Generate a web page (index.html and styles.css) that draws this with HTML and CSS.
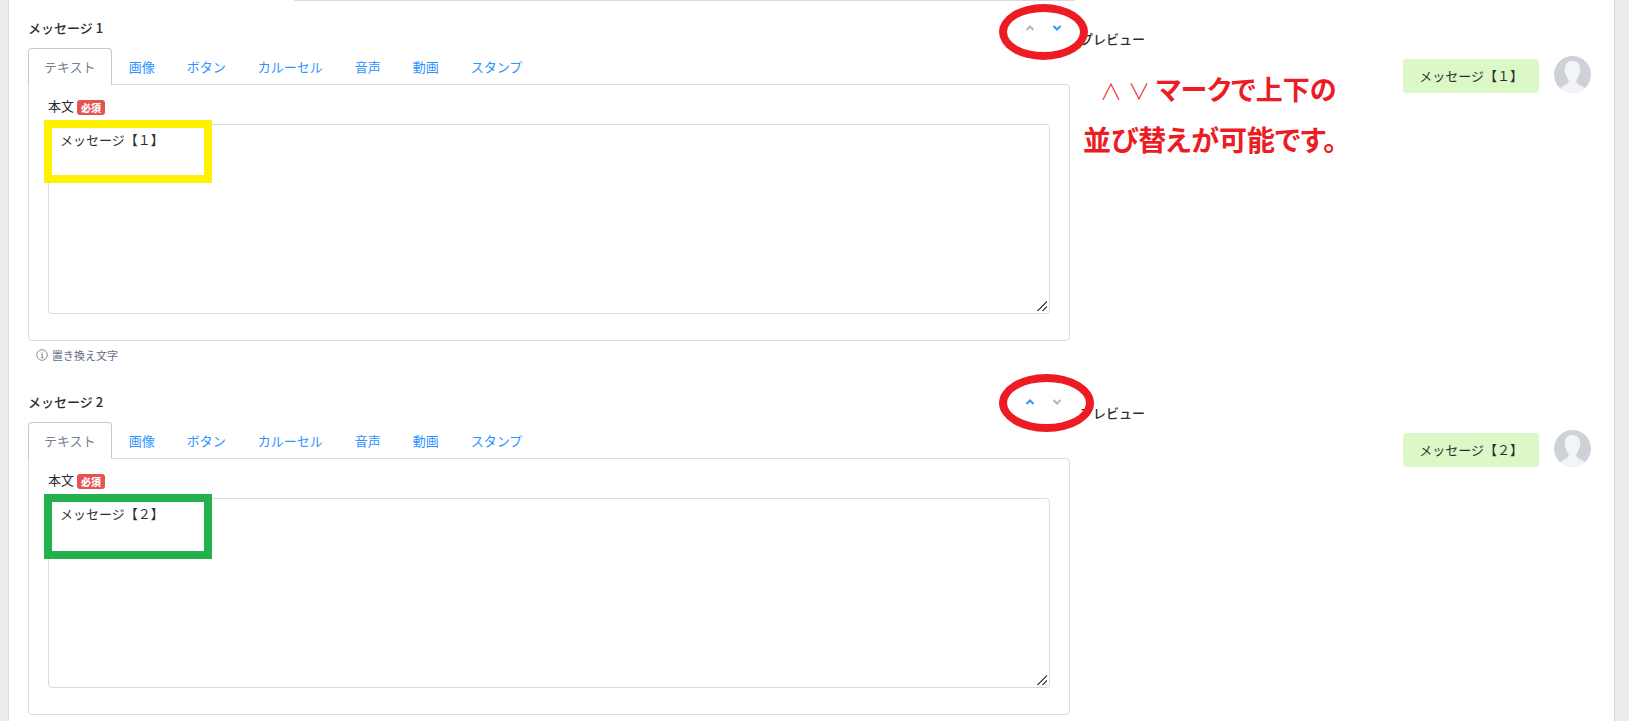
FILE: index.html
```html
<!DOCTYPE html>
<html lang="ja">
<head>
  <meta charset="UTF-8">
  <meta name="viewport" content="width=device-width, initial-scale=1.0">
  <title>メッセージ</title>
  <link rel="stylesheet" href="styles.css">
</head>
<body>
<main class="sheet">
  <div class="prev-field"></div>

  <section class="message">
    <div class="editor">
      <div class="head">
        <h2 class="title">メッセージ 1</h2>
        <div class="sort">
          <button class="sort-btn" type="button" aria-label="上へ" disabled>
            <svg width="10" height="8" viewBox="0 0 10 8"><path d="M1.500 6L5 2.500L8.500 6"/></svg>
          </button>
          <button class="sort-btn" type="button" aria-label="下へ">
            <svg width="10" height="8" viewBox="0 0 10 8"><path d="M1.500 2L5 5.500L8.500 2"/></svg>
          </button>
          <span class="ring"></span>
        </div>
      </div>
      <nav class="tabs">
        <a class="tab active" href="#text1">テキスト</a>
        <a class="tab" href="#image1">画像</a>
        <a class="tab" href="#button1">ボタン</a>
        <a class="tab" href="#carousel1">カルーセル</a>
        <a class="tab" href="#audio1">音声</a>
        <a class="tab" href="#video1">動画</a>
        <a class="tab" href="#stamp1">スタンプ</a>
      </nav>
      <div class="panel" id="text1">
        <label class="label" for="body1">本文 <span class="badge">必須</span></label>
        <div class="field">
          <textarea class="body-text" id="body1">メッセージ【１】</textarea>
          <span class="mark mark-yellow"></span>
        </div>
      </div>
      <a class="hint" href="#replace1">
        <svg width="12" height="12" viewBox="0 0 12 12"><circle cx="6" cy="6" r="5.300"/><path d="M5 5.200H6.200V8.700M4.800 8.700H7.500M5.600 3.300H6.600"/></svg>
        置き換え文字
      </a>
    </div>
    <div class="preview">
      <p class="preview-label">プレビュー</p>
      <div class="talk">
        <p class="bubble">メッセージ【１】</p>
        <svg class="avatar" viewBox="0 0 37 37">
          <circle cx="18.500" cy="18.500" r="18.500" fill="#ced2d8"/>
          <path fill="#f2f4f6" d="M18.500 5C13.500 5 11 8.500 11 12.500C11 13.500 10.500 14 10.700 15.500C11 17.500 11.700 18 12.200 19C12.700 21.500 13.700 23 14.800 24.300C15 28 11 29 6 32.200A18.500 18.500 0 0 0 31 32.200C26 29 22 28 22.200 24.300C23.300 23 24.300 21.500 24.800 19C25.300 18 26 17.500 26.300 15.500C26.500 14 26 13.500 26 12.500C26 8.500 23.500 5 18.500 5Z"/>
        </svg>
      </div>
      <p class="note">
        <span class="note-line note-first"><span class="note-arrow">∧</span><span class="note-arrow">∨</span>マークで上下の</span>
        <span class="note-line">並び替えが可能です。</span>
      </p>
    </div>
  </section>

  <section class="message">
    <div class="editor">
      <div class="head">
        <h2 class="title">メッセージ 2</h2>
        <div class="sort">
          <button class="sort-btn" type="button" aria-label="上へ">
            <svg width="10" height="8" viewBox="0 0 10 8"><path d="M1.500 6L5 2.500L8.500 6"/></svg>
          </button>
          <button class="sort-btn" type="button" aria-label="下へ" disabled>
            <svg width="10" height="8" viewBox="0 0 10 8"><path d="M1.500 2L5 5.500L8.500 2"/></svg>
          </button>
          <span class="ring ring-wide"></span>
        </div>
      </div>
      <nav class="tabs">
        <a class="tab active" href="#text2">テキスト</a>
        <a class="tab" href="#image2">画像</a>
        <a class="tab" href="#button2">ボタン</a>
        <a class="tab" href="#carousel2">カルーセル</a>
        <a class="tab" href="#audio2">音声</a>
        <a class="tab" href="#video2">動画</a>
        <a class="tab" href="#stamp2">スタンプ</a>
      </nav>
      <div class="panel" id="text2">
        <label class="label" for="body2">本文 <span class="badge">必須</span></label>
        <div class="field">
          <textarea class="body-text" id="body2">メッセージ【２】</textarea>
          <span class="mark mark-green"></span>
        </div>
      </div>
    </div>
    <div class="preview">
      <p class="preview-label">プレビュー</p>
      <div class="talk">
        <p class="bubble">メッセージ【２】</p>
        <svg class="avatar" viewBox="0 0 37 37">
          <circle cx="18.500" cy="18.500" r="18.500" fill="#ced2d8"/>
          <path fill="#f2f4f6" d="M18.500 5C13.500 5 11 8.500 11 12.500C11 13.500 10.500 14 10.700 15.500C11 17.500 11.700 18 12.200 19C12.700 21.500 13.700 23 14.800 24.300C15 28 11 29 6 32.200A18.500 18.500 0 0 0 31 32.200C26 29 22 28 22.200 24.300C23.300 23 24.300 21.500 24.800 19C25.300 18 26 17.500 26.300 15.500C26.500 14 26 13.500 26 12.500C26 8.500 23.500 5 18.500 5Z"/>
        </svg>
      </div>
    </div>
  </section>
</main>
</body>
</html>
```

FILE: styles.css
```css
:root {
  --line: #d8dbe0;
  --blue: #2e93ff;
  --red: #ed1c24;
}
* {
  margin: 0;
  padding: 0;
  box-sizing: border-box;
}
body {
  font-family: "Noto Sans CJK JP", sans-serif;
  font-size: 13px;
  line-height: 20px;
  color: #2a2e33;
  background-color: #ebedef;
}
a {
  text-decoration: none;
  color: var(--blue);
}
.sheet {
  min-height: 100vh;
  margin: 0 15px 0 9px;
  padding: 0 23px 0 19px;
  background-color: white;
  box-shadow: 0 0 2px rgba(0, 0, 0, .25);
}
.prev-field {
  width: 50%;
  height: 1px;
  margin-left: 17%;
  background-color: var(--line);
}
.message {
  display: grid;
  grid-template-columns: 2fr 1fr;
}

/* left column */
.head {
  display: flex;
  align-items: center;
  justify-content: space-between;
  height: 47px;
  padding-top: 6px;
}
.title {
  font-size: 13px;
  font-weight: 500;
}
.sort {
  position: relative;
  display: flex;
}
.sort-btn {
  display: flex;
  align-items: center;
  justify-content: center;
  width: 27px;
  height: 20px;
  border: none;
  background: none;
  color: var(--blue);
}
.sort-btn:disabled {
  color: #b4b6b9;
}
.sort-btn path {
  fill: none;
  stroke: currentColor;
  stroke-width: 2;
}
.ring {
  position: absolute;
  z-index: 2;
  top: -14px;
  left: -17px;
  width: 89px;
  height: 56px;
  border: 8px solid var(--red);
  border-radius: 50%;
  pointer-events: none;
}
.ring-wide {
  top: -18px;
  width: 95px;
  height: 58px;
}
.tabs {
  display: flex;
  position: relative;
}
.tab {
  height: 36px;
  padding: 8px 15px 0;
  border: 1px solid transparent;
  border-bottom: none;
  border-radius: 4px 4px 0 0;
}
.tab.active {
  height: 37px;
  margin: 0 1px -1px 0;
  color: #768192;
  border-color: #c4c9d0;
  background-color: white;
}
.panel {
  height: 257px;
  padding: 11px 19px 0;
  border: 1px solid var(--line);
  border-radius: 0 4px 4px 4px;
}
.label {
  display: flex;
  align-items: center;
  gap: 3px;
  margin-bottom: 8px;
}
.badge {
  margin-top: 3px;
  padding: 0 4px;
  font-size: 10px;
  font-weight: 900;
  line-height: 15px;
  color: white;
  background-color: #e55353;
  border-radius: 3px;
}
.field {
  position: relative;
}
.body-text {
  display: block;
  width: 100%;
  height: 190px;
  padding: 5px 11px;
  font: inherit;
  color: inherit;
  border: 1px solid var(--line);
  border-radius: 4px;
  outline: none;
  resize: vertical;
}
.body-text::-webkit-resizer {
  background: linear-gradient(135deg, transparent 53%, #555 53%, #555 62%, transparent 62%, transparent 74%, #555 74%, #555 83%, transparent 83%) no-repeat 2px 2px / 11px 11px;
}
.mark {
  position: absolute;
  top: -4px;
  left: -4px;
  width: 168px;
  height: 63px;
  border: 8px solid #fff200;
  pointer-events: none;
}
.mark-green {
  height: 65px;
  border-color: #22b14c;
}
.hint {
  display: flex;
  align-items: center;
  gap: 4px;
  height: 34px;
  padding: 0 8px 7px;
  font-size: 11px;
  color: #636f83;
}
.hint svg {
  fill: none;
  stroke: currentColor;
  stroke-width: .8;
}

/* right column */
.preview {
  position: relative;
  padding: 28px 0 0 10px;
}
.preview-label {
  font-weight: 500;
}
.talk {
  display: flex;
  align-items: center;
  justify-content: flex-end;
  gap: 15px;
  margin-top: 6px;
}
.bubble {
  margin-top: 4px;
  padding: 7px 16px;
  background-color: #dcf8c6;
  border-radius: 4px;
}
.avatar {
  width: 37px;
  height: 37px;
}
.note {
  position: absolute;
  top: 63px;
  left: 13px;
  font-size: 28px;
  font-weight: bold;
  line-height: 50px;
  white-space: nowrap;
  color: var(--red);
  font-feature-settings: "palt";
}
.note-line {
  display: block;
}
.note-first {
  display: flex;
  padding-left: 17px;
  font-size: 27px;
}
.note-arrow {
  width: 28px;
  font-size: 22px;
  font-weight: 300;
}
```
